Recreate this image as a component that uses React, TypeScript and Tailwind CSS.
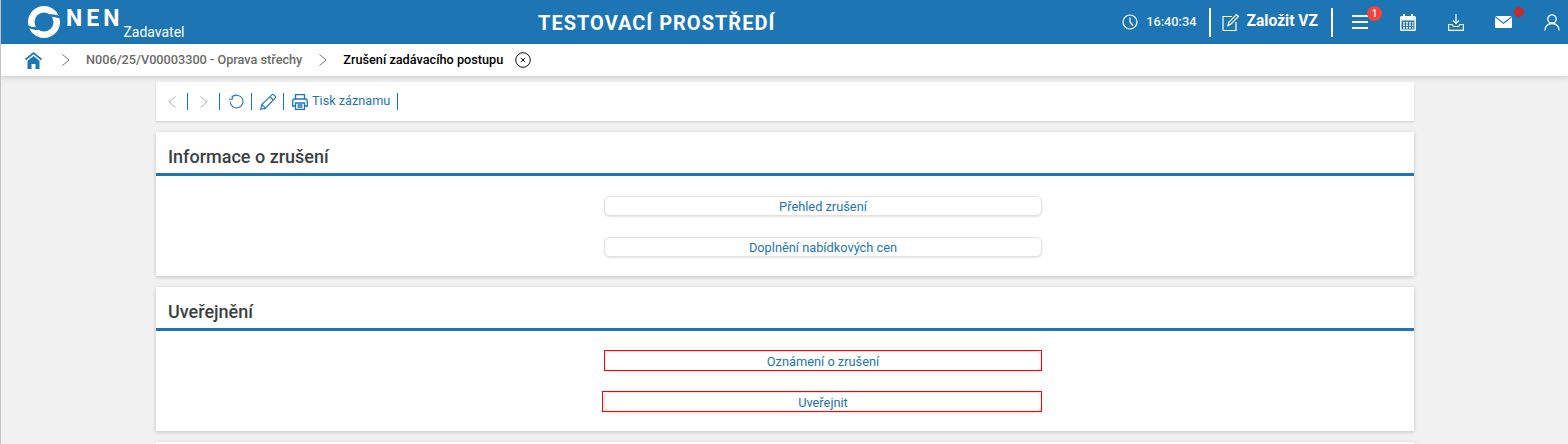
import React from "react";

const Sep = () => <span className="block w-px h-[17px] bg-[#1d75b3] shrink-0" />;

const slit = "M32.500 10.500V12.800C30 11.700 27 11 24 11L21 8C25 8 29 9 32.500 10.500Z";

const Logo = () => (
  <svg width="32" height="32" viewBox="0 0 32 32" className="shrink-0">
    <circle cx="16" cy="16" r="16" fill="#fff" />
    <circle cx="16" cy="16" r="9.500" fill="#1d75b3" />
    <path d={slit} fill="#1d75b3" />
    <path d={slit} fill="#1d75b3" transform="rotate(180 16 16)" />
  </svg>
);

const Home = () => (
  <svg width="17" height="17" viewBox="0 0 17 17" fill="#1d75b3" className="shrink-0">
    <path d="M8.500 0 0 6.800 1 8.200 8.500 2.300 16 8.200 17 6.800Z" />
    <path d="M8.500 4 2.500 8.800V17H6.500V12H10.500V17H14.500V8.800Z" />
  </svg>
);

const Chevron = ({ left = false, color = "#777" }: { left?: boolean; color?: string }) => (
  <svg width="8" height="12" viewBox="0 0 8 12" fill="none" stroke={color} strokeWidth="1" className="shrink-0">
    <path d={left ? "M7.500.5 1 6l6.500 5.500" : "M.5.5 7 6 .5 11.500"} />
  </svg>
);

const Card = ({ title, children }: { title: string; children: React.ReactNode }) => (
  <section className="bg-white shadow-[0_1px_4px_rgba(0,0,0,0.2)]">
    <h2 className="h-[44px] pl-3 pt-[14px] border-b-[3px] border-[#1d75b3] text-[18px] leading-[22px] font-medium text-[#3b3f44]">{title}</h2>
    <div className="flex flex-col items-center pl-[76px] pt-5 pb-[19px] gap-[21px]">{children}</div>
  </section>
);

const Btn = ({ label, red = false, wide = false }: { label: string; red?: boolean; wide?: boolean }) => (
  <div className="relative w-[438px] h-[20px]">
    <button className="block w-full h-full pt-px rounded-[6px] border border-[#e2e2e2] bg-white shadow-[0_1px_2px_rgba(0,0,0,0.12)] text-[12.800px] leading-[17px] text-[#1d75b3]">{label}</button>
    {red && <span className={`absolute top-[-1px] right-0 h-[21px] border border-[#ff0000] ${wide ? "left-[-2px]" : "left-0"}`} />}
  </div>
);

export default function App() {
  return (
    <div className="h-[444px] overflow-hidden bg-[#f1f1f1] border-l border-[#c4c4c4] font-['Roboto',sans-serif]">
      <header className="h-[44px] bg-[#1d75b3] text-white flex items-center relative">
        <div className="flex items-center pl-[27px] w-[400px] h-full">
          <Logo />
          <span className="ml-[6px] mb-[7px] font-bold text-[23px] tracking-[4px] leading-none">NEN</span>
          <span className="mt-[19px] text-[14px] leading-none">Zadavatel</span>
        </div>
        <div className="absolute left-[537px] top-[11px] text-[20px] leading-[24px] font-bold tracking-[1px]">TESTOVACÍ PROSTŘEDÍ</div>
        <div className="ml-auto flex items-center h-full">
          <svg width="16" height="16" viewBox="0 0 16 16" fill="none" stroke="#fff" strokeWidth="1.200"><circle cx="8" cy="8" r="7" /><path d="M8 3.500V8l3 3.500" /></svg>
          <span className="ml-[8px] text-[12.800px] font-medium text-[#f0f5fa]">16:40:34</span>
          <span className="ml-[12px] w-[2px] h-[29px] bg-white" />
          <svg className="ml-[11px]" width="17" height="17" viewBox="0 0 17 17" fill="none" stroke="#fff" strokeWidth="1.200"><path d="M10 2.500H1v14h13V8" /><path d="M6 11.500 7 8l7.500-7.500 2 2L9 10Z" /></svg>
          <span className="ml-[8px] text-[15.600px] font-bold">Založit VZ</span>
          <span className="ml-[13px] w-[2px] h-[29px] bg-white" />
          <div className="relative ml-[19px] w-[16px] h-[14px] flex flex-col justify-between">
            <span className="h-[2px] bg-white" /><span className="h-[2px] bg-white" /><span className="h-[2px] bg-white" />
            <span className="absolute left-[15px] top-[-9px] w-[15px] h-[15px] rounded-full bg-[#f4433c] text-[10px] leading-[15px] text-center font-medium">1</span>
          </div>
          <svg className="ml-[32px]" width="16" height="17" viewBox="0 0 16 17" fill="#fff"><path d="M1.500 2H3V0h2v2h6V0h2v2h1.500A1.500 1.500 0 0 1 16 3.500V15.500A1.500 1.500 0 0 1 14.500 17h-13A1.500 1.500 0 0 1 0 15.500V3.500A1.500 1.500 0 0 1 1.500 2Z" /><path d="M1.500 6.500h13v9h-13Z" fill="#1d75b3" /><path d="M3 8h2v1.500H3ZM6 8h2v1.500H6ZM9 8h2v1.500H9ZM12 8h1.500v1.500H12ZM3 10.500h2V12H3ZM6 10.500h2V12H6ZM9 10.500h2V12H9ZM12 10.500h1.500V12H12ZM3 13h2v1.500H3ZM6 13h2v1.500H6ZM9 13h2v1.500H9ZM12 13h1.500v1.500H12Z" /></svg>
          <svg className="ml-[32px]" width="16" height="17" viewBox="0 0 16 17" fill="none" stroke="#fff" strokeWidth="1.200"><path d="M8 0v9M5 6.500l3 3 3-3" /><path d="M.6 10.500H4L5.500 12.500h5L12 10.500h3.400V16.400H.6Z" /></svg>
          <div className="relative ml-[31px] w-[17px] h-[12px]">
            <svg width="17" height="12" viewBox="0 0 17 12" className="block"><path d="M1 0h15a1 1 0 0 1 .6.2L8.500 6.500.4.200A1 1 0 0 1 1 0Z" fill="#fff" /><path d="M0 1.300 8.500 8 17 1.300V11a1 1 0 0 1-1 1H1a1 1 0 0 1-1-1Z" fill="#fff" /></svg>
            <span className="absolute left-[19px] top-[-9px] w-[10px] h-[10px] rounded-full bg-[#c72c2c]" />
          </div>
          <svg className="ml-[32px] mr-[8px]" width="16" height="17" viewBox="0 0 16 17" fill="none" stroke="#fff" strokeWidth="1.300"><circle cx="8" cy="5" r="4.200" /><path d="M.8 16.500c0-4 3-7 7.200-7s7.200 3 7.200 7" /></svg>
        </div>
      </header>

      <nav className="relative z-10 h-[32px] bg-white shadow-[0_2px_5px_rgba(0,0,0,0.15)] flex items-center pl-[24px] text-[12.700px] font-medium">
        <Home />
        <span className="ml-[20px]"><Chevron /></span>
        <span className="ml-[16px] text-[#6b6b6b]">N006/25/V00003300 - Oprava střechy</span>
        <span className="ml-[17px]"><Chevron /></span>
        <span className="ml-[16px] text-black">Zrušení zadávacího postupu</span>
        <svg className="ml-[12px]" width="16" height="16" viewBox="0 0 16 16" fill="none" stroke="#111" strokeWidth="1"><circle cx="8" cy="8" r="7.300" /><path d="M5.800 5.800l4.400 4.400M10.200 5.800l-4.400 4.400" /></svg>
      </nav>

      <main className="w-[1258px] ml-[155px] pt-[6px] flex flex-col gap-[11px]">
        <div className="h-[39px] bg-white shadow-[0_1px_2px_rgba(0,0,0,0.15)] flex items-center pl-[12px] text-[#1d75b3]">
          <Chevron left color="#aab2ba" />
          <span className="ml-[11px]"><Sep /></span>
          <span className="ml-[12px]"><Chevron color="#aab2ba" /></span>
          <span className="ml-[11px]"><Sep /></span>
          <svg className="ml-[9px]" width="15" height="15" viewBox="0 0 16 16" fill="none" stroke="#1d75b3" strokeWidth="1.100"><path d="M3 3.500A6.800 6.800 0 1 1 1.300 8" /><path d="M0 5.500h3.500V1.500" /></svg>
          <span className="ml-[7px]"><Sep /></span>
          <svg className="ml-[8px]" width="16" height="16" viewBox="0 0 16 16" fill="none" stroke="#1d75b3" strokeWidth="1.100"><path d="M.7 15.300 1.800 10.500 11.800.9a1.500 1.500 0 0 1 2.100 0l1.200 1.200a1.500 1.500 0 0 1 0 2.100L5.500 14.200Z" /><path d="M1.800 10.500l3.700 3.700M10 2.700l3.300 3.300" /></svg>
          <span className="ml-[7px]"><Sep /></span>
          <svg className="ml-[8px]" width="16" height="16" viewBox="0 0 16 16" fill="none" stroke="#1d75b3" strokeWidth="1.300"><path d="M3.500 5V.7h9V5" /><path d="M3.500 12H.7V6.500A1.500 1.500 0 0 1 2.200 5h11.600a1.500 1.500 0 0 1 1.500 1.500V12h-2.800" /><path d="M3.500 9h9v6.300h-9ZM5.500 11h5M5.500 13h5" /></svg>
          <span className="ml-[4px] text-[12.700px] leading-[18px] mb-[2px]">Tisk záznamu</span>
          <span className="ml-[7px]"><Sep /></span>
        </div>
        <Card title="Informace o zrušení">
          <Btn label="Přehled zrušení" />
          <Btn label="Doplnění nabídkových cen" />
        </Card>
        <Card title="Uveřejnění">
          <Btn label="Oznámení o zrušení" red />
          <Btn label="Uveřejnit" red wide />
        </Card>
        <div className="h-[40px] bg-white shadow-[0_1px_4px_rgba(0,0,0,0.2)]" />
      </main>
    </div>
  );
}
